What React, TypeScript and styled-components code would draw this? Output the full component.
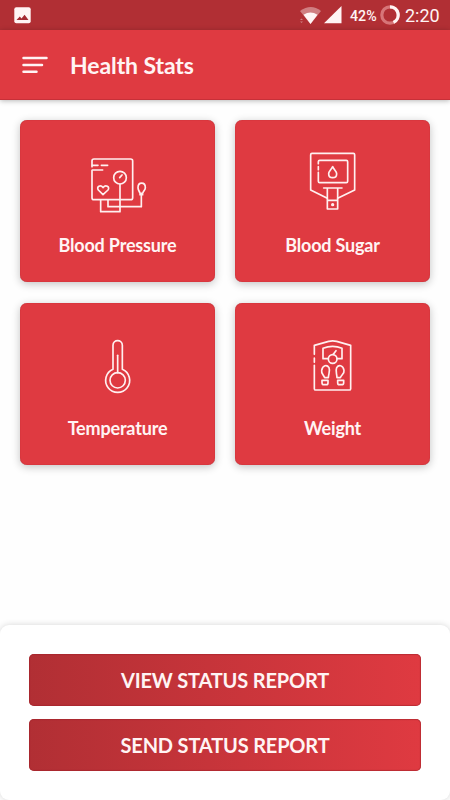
import React from "react";
import styled, { createGlobalStyle } from "styled-components";

const GlobalStyle = createGlobalStyle`
  * { box-sizing: border-box; }
  body { margin: 0; background: #fefefe; font-family: Lato, sans-serif; }
  button { font: inherit; border: 0; padding: 0; color: inherit; background: none; }
`;

const Screen = styled.div`
  width: 450px;
  height: 800px;
  display: flex;
  flex-direction: column;
  overflow: hidden;
`;

const StatusBar = styled.div`
  height: 30px;
  flex: none;
  display: flex;
  align-items: center;
  justify-content: space-between;
  padding: 0 10px 0 14px;
  background: #b12f34;
  color: #fff4f4;
  font-family: Roboto, sans-serif;
`;

const StatusGroup = styled.div`
  display: flex;
  align-items: center;
`;

const Battery = styled.span`
  width: 27px;
  margin: 1px 3px 0 8px;
  font-size: 14.2px;
  font-weight: 500;
  white-space: nowrap;
`;

const Clock = styled.span`
  width: 35px;
  margin: 1px 0 0 5px;
  font-size: 18px;
  white-space: nowrap;
`;

const Header = styled.header`
  height: 70px;
  flex: none;
  display: flex;
  align-items: center;
  gap: 22px;
  padding-left: 22px;
  background: #df3a41;
  border-bottom: 1px solid #c73038;
  box-shadow: 0 1px 5px rgba(0, 0, 0, 0.28);
  color: #fff4f4;
`;

const MenuButton = styled.button`
  width: 26px;
  height: 18px;
  display: flex;
`;

const Title = styled.h1`
  margin: 0;
  font-size: 23px;
  letter-spacing: -0.1px;
  font-weight: 700;
  line-height: 28px;
`;

const Grid = styled.main`
  flex: 1;
  display: grid;
  grid-template-columns: 195px 195px;
  grid-auto-rows: 162px;
  gap: 21px 20px;
  padding: 20px 20px 0;
`;

const Card = styled.button`
  display: flex;
  flex-direction: column;
  align-items: center;
  padding-top: 25px;
  border-radius: 7px;
  background: #df3a41;
  color: #fff4f4;
  box-shadow: inset 0 0 1px #a02028, 0 2px 8px rgba(0, 0, 0, 0.24);
`;

const CardLabel = styled.span`
  margin-top: 14px;
  font-size: 18px;
  letter-spacing: -0.18px;
  font-weight: 700;
  line-height: 22px;
`;

const LineIcon = styled.svg`
  width: 75px;
  height: 75px;
  fill: none;
  stroke: #fff0f0;
  stroke-width: 5;
  stroke-linecap: round;
  stroke-linejoin: round;
`;

const Panel = styled.footer`
  height: 175px;
  flex: none;
  display: flex;
  flex-direction: column;
  gap: 13px;
  padding: 29px 29px 0;
  border-radius: 9px;
  background: #fff;
  box-shadow: 0 0 6px rgba(0, 0, 0, 0.16);
`;

const ActionButton = styled.button`
  height: 52px;
  border-radius: 5px;
  background: linear-gradient(90deg, #b12f34, #df3a41);
  box-shadow: inset 0 0 1px 0.5px #a02029;
  color: #fff4f4;
  font-size: 20px;
  letter-spacing: -0.17px;
  font-weight: 700;
  line-height: 24px;
`;

const PressureIcon = () => (
  <LineIcon viewBox="0 0 225 225">
    <path d="M36 77V158Q36 164 42 164H152Q158 164 158 158V48Q158 42 152 42H42Q36 42 36 48V65" />
    <path d="M37 61H54M64 61H83M37 75H68" />
    <circle cx="120" cy="98" r="19" />
    <path d="M119 98L126 90M120 118V200H62V165M84 165V185H184V149M180 149H188M180 145C178 138 174 135 174 128C174 110 196 110 196 128C196 135 190 138 188 145Z" />
    <path d="M69 149L55 135C48 125 62 117 69 128C77 117 91 125 84 135Z" />
  </LineIcon>
);

const SugarIcon = () => (
  <LineIcon viewBox="0 0 225 225">
    <path d="M97 160L47 135V29Q47 25 51 25H175Q179 25 179 29V135L128 160" />
    <path d="M70 82V109Q70 113 74 113H154Q158 113 158 109V50Q158 46 154 46H74Q70 46 70 50V56M70 65V74" />
    <path d="M113 65C108 75 101 79 101 86C101 102 125 102 125 86C125 79 117 75 113 65Z" />
    <path d="M86 129H141M97 130V192H128V130M98 166H127" />
    <circle cx="113" cy="179" r="2.5" />
  </LineIcon>
);

const TemperatureIcon = () => (
  <LineIcon viewBox="0 -6 225 225">
    <path d="M99 118V46C99 27 127 27 127 46V118A36 36 0 1 1 99 118Z" />
    <circle cx="113" cy="151" r="23" />
    <path d="M113 76V128" />
  </LineIcon>
);

const WeightIcon = () => (
  <LineIcon viewBox="0 -6 225 225">
    <path d="M58 106V176Q58 180 62 180H163Q167 180 167 176V46L125 34Q113 31 101 34L58 46V73M58 84V97" />
    <path d="M99 86H84V55Q113 43 141 55V86H126" />
    <circle cx="113" cy="87" r="13" />
    <path d="M115 73L123 62" />
    <path d="M89 143C85 134 78 130 80 121C83 105 96 103 102 113C106 122 101 129 100 143ZM136 143C140 134 149 130 147 121C144 105 131 103 125 113C121 122 125 129 126 143Z" />
    <path d="M81 151H99V158Q99 164 94 164H87Q81 164 81 158ZM128 151H146V158Q146 164 140 164H133Q128 164 128 158Z" />
  </LineIcon>
);

const stats = [
  { label: "Blood Pressure", Icon: PressureIcon },
  { label: "Blood Sugar", Icon: SugarIcon },
  { label: "Temperature", Icon: TemperatureIcon },
  { label: "Weight", Icon: WeightIcon },
];

export default function App() {
  return (
    <Screen>
      <GlobalStyle />
      <StatusBar>
        <svg width="17" height="17" viewBox="0 0 17 17">
          <rect x="0.3" y="0.3" width="16.4" height="16" rx="2" fill="#fff4f4" />
          <path d="M2.5 13L5.8 9.5L7.5 11.5L10.6 7.8L14.5 13Z" fill="#a52931" />
        </svg>
        <StatusGroup>
          <svg width="42" height="18" viewBox="0 0 42 18" fill="#fff4f4">
            <path d="M0 5Q11 -3 21 5L10.5 18Z" opacity=".4" />
            <path d="M3.5 8.8Q10.5 4 17.5 8.8L10.5 18Z" />
            <path d="M24 17.2L41.5 0V17.2Z" />
            <path d="M0 14L1.5 12.5L3 14M0 15.5L1.5 17L3 15.5" opacity=".4" />
          </svg>
          <Battery>42%</Battery>
          <svg width="20" height="20" viewBox="0 0 20 20" fill="none" strokeWidth="3.2">
            <circle cx="10" cy="10" r="8.2" stroke="#d77578" />
            <path d="M10 1.8A8.2 8.2 0 0 1 13.5 17.4" stroke="#fff4f4" />
          </svg>
          <Clock>2:20</Clock>
        </StatusGroup>
      </StatusBar>
      <Header>
        <MenuButton aria-label="Menu">
          <svg width="26" height="18" viewBox="0 0 26 18" stroke="#fff4f4" strokeWidth="2.5" strokeLinecap="round">
            <path d="M1.5 1.9H24.5M1.5 8.9H20M1.5 15.8H14.5" />
          </svg>
        </MenuButton>
        <Title>Health Stats</Title>
      </Header>
      <Grid>
        {stats.map(({ label, Icon }) => (
          <Card key={label}>
            <Icon />
            <CardLabel>{label}</CardLabel>
          </Card>
        ))}
      </Grid>
      <Panel>
        <ActionButton>VIEW STATUS REPORT</ActionButton>
        <ActionButton>SEND STATUS REPORT</ActionButton>
      </Panel>
    </Screen>
  );
}
